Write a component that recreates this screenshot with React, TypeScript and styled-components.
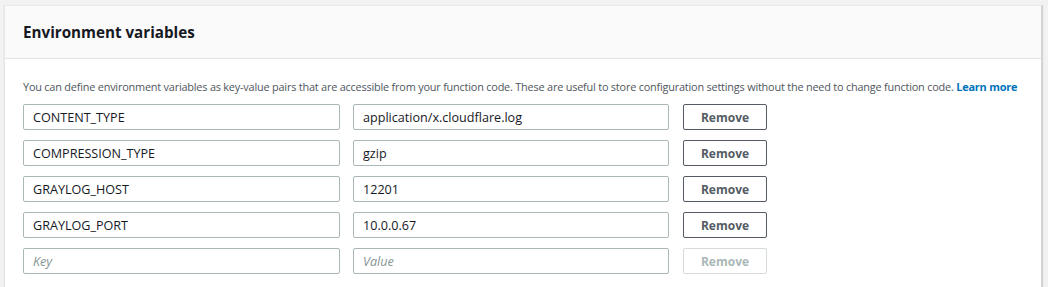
import React from "react";
import styled, { createGlobalStyle } from "styled-components";

const Global = createGlobalStyle`
  html, body { margin: 0; padding: 0; background: #f2f2f2; }
  body { font-family: "Open Sans", "Noto Sans", Arial, sans-serif; color: #16191f; }
  * { box-sizing: border-box; }
`;

const Page = styled.div`
  padding: 5px 5px 0 4px;
  height: 287px;
  overflow: hidden;
`;

const Panel = styled.section`
  background: #fff;
  border: 1px solid #e6e8e8;
  border-right: 2px solid #d0d4d4;
  box-shadow: 0 1px 1px rgba(0, 28, 36, 0.15);
  height: 300px;
`;

const Header = styled.header`
  background: #fafafa;
  border-bottom: 1px solid #e3e5e5;
  height: 53px;
  display: flex;
  align-items: center;
  padding: 0 18px;
`;

const Title = styled.h2`
  margin: 0;
  font-size: 15.2px;
  font-weight: 700;
  color: #16191f;
`;

const Body = styled.div`
  padding: 20px 18px 0 18px;
`;

const Description = styled.p`
  margin: 0 0 9px 0;
  font-size: 10.9px;
  letter-spacing: -0.2px;
  line-height: 16px;
  color: #4f565e;
  white-space: nowrap;
`;

const Link = styled.a`
  color: #0073bb;
  font-weight: 700;
  text-decoration: none;
`;

const Rows = styled.div`
  display: flex;
  flex-direction: column;
  gap: 10px;
`;

const Row = styled.div`
  display: grid;
  grid-template-columns: 317px 316px 85px;
  column-gap: 13px;
  & > :last-child { margin-left: 1px; }
`;

const Input = styled.input`
  height: 26px;
  border: 1px solid #aab7b8;
  border-radius: 2px;
  padding: 0 9px;
  font-family: inherit;
  font-size: 12.6px;
  color: #16191f;
  background: #fff;
  outline: none;
  &::placeholder {
    color: #879596;
    font-style: italic;
  }
`;

const Button = styled.button<{ $disabled?: boolean }>`
  height: 26px;
  border: 1px solid ${(p) => (p.$disabled ? "#d5dbdb" : "#545b64")};
  border-radius: 2px;
  background: #fff;
  color: ${(p) => (p.$disabled ? "#aab7b8" : "#545b64")};
  font-family: inherit;
  font-size: 12px;
  font-weight: 700;
  padding: 0;
  cursor: ${(p) => (p.$disabled ? "default" : "pointer")};
`;

const vars = [
  { key: "CONTENT_TYPE", value: "application/x.cloudflare.log" },
  { key: "COMPRESSION_TYPE", value: "gzip" },
  { key: "GRAYLOG_HOST", value: "12201" },
  { key: "GRAYLOG_PORT", value: "10.0.0.67" },
];

export default function App() {
  return (
    <>
      <Global />
      <Page>
        <Panel>
          <Header>
            <Title>Environment variables</Title>
          </Header>
          <Body>
            <Description>
              You can define environment variables as key-value pairs that are accessible from your function code. These are useful to store configuration settings without the need to change function code.{" "}
              <Link href="#">Learn more</Link>
            </Description>
            <Rows>
              {vars.map((v) => (
                <Row key={v.key}>
                  <Input defaultValue={v.key} />
                  <Input defaultValue={v.value} />
                  <Button>Remove</Button>
                </Row>
              ))}
              <Row>
                <Input placeholder="Key" />
                <Input placeholder="Value" />
                <Button $disabled disabled>Remove</Button>
              </Row>
            </Rows>
          </Body>
        </Panel>
      </Page>
    </>
  );
}
